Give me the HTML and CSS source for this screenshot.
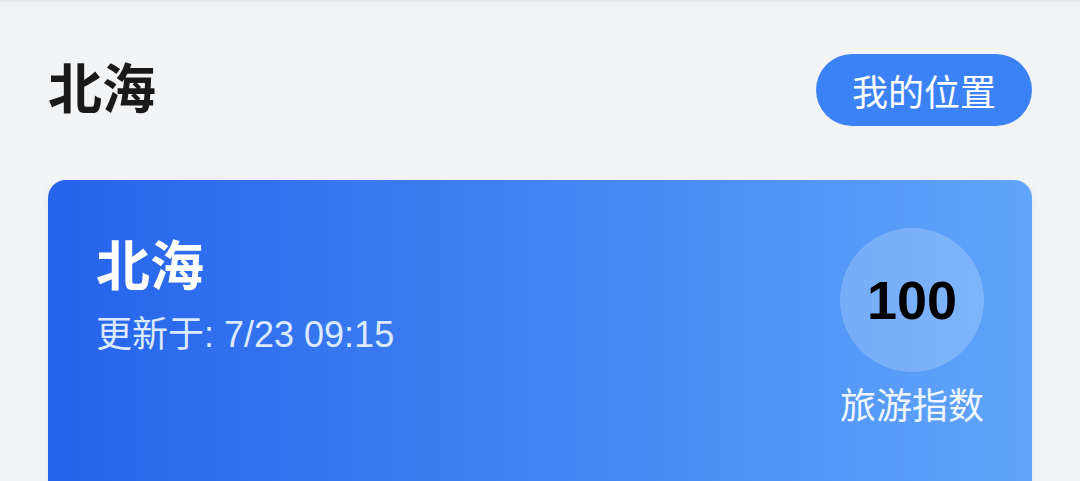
FILE: index.html
```html
<!DOCTYPE html>
<html lang="zh-CN">
<head>
    <meta charset="utf-8">
    <title>北海 - 旅游指数</title>
    <link rel="stylesheet" href="styles.css">
</head>
<body>
    <div class="topbar"></div>

    <main class="page">
        <header class="page-header">
            <h1 class="city-name">北海</h1>
            <button class="locate-btn">我的位置</button>
        </header>

        <section class="weather-card">
            <div class="card-info">
                <h2 class="card-city">北海</h2>
                <p class="card-updated">更新于: 7/23 09:15</p>
            </div>
            <div class="card-score">
                <div class="score-circle">100</div>
                <div class="score-label">旅游指数</div>
            </div>
        </section>
    </main>
</body>
</html>
```

FILE: styles.css
```css
body {
    margin: 0;
    background-color: #f3f4f6;
    color: #1a1a1a;
    font-family: "Liberation Sans", "Noto Sans CJK SC", sans-serif;
}

/* thin bar peeking above the page */
.topbar {
    height: 2px;
    background-color: #e5e7eb;
    box-shadow: 0 2px 6px rgba(0, 0, 0, 0.08);
}

.page {
    padding: 52px 48px 0;
}

.page-header {
    display: flex;
    align-items: center;
    justify-content: space-between;
    margin-bottom: 54px;
}

.city-name {
    margin: 0;
    font-size: 54px;
    line-height: 72px;
    font-weight: bold;
}

.locate-btn {
    height: 72px;
    padding: 0 36px;
    border: none;
    border-radius: 36px;
    background-color: #3b82f6;
    color: #fff;
    font-family: inherit;
    font-size: 36px;
    cursor: pointer;
}

.weather-card {
    display: flex;
    justify-content: space-between;
    align-items: flex-start;
    min-height: 400px;
    padding: 48px;
    border-radius: 18px;
    background: linear-gradient(to right, #2563eb, #60a5fa);
    box-shadow: 0 4px 10px rgba(0, 0, 0, 0.08);
    color: #fff;
}

.card-city {
    margin: -1px 0 0;
    font-size: 54px;
    line-height: 81px;
    font-weight: bold;
}

.card-updated {
    margin: 0;
    font-size: 36px;
    line-height: 54px;
    color: #dbeafe;
}

.card-score {
    display: flex;
    flex-direction: column;
    align-items: center;
}

.score-circle {
    width: 144px;
    height: 144px;
    border-radius: 50%;
    background-color: rgba(255, 255, 255, 0.2);
    display: flex;
    align-items: center;
    justify-content: center;
    color: #000;
    font-size: 54px;
    font-weight: bold;
}

.score-label {
    margin-top: 8px;
    font-size: 36px;
    line-height: 54px;
    color: #eff6ff;
}
```
